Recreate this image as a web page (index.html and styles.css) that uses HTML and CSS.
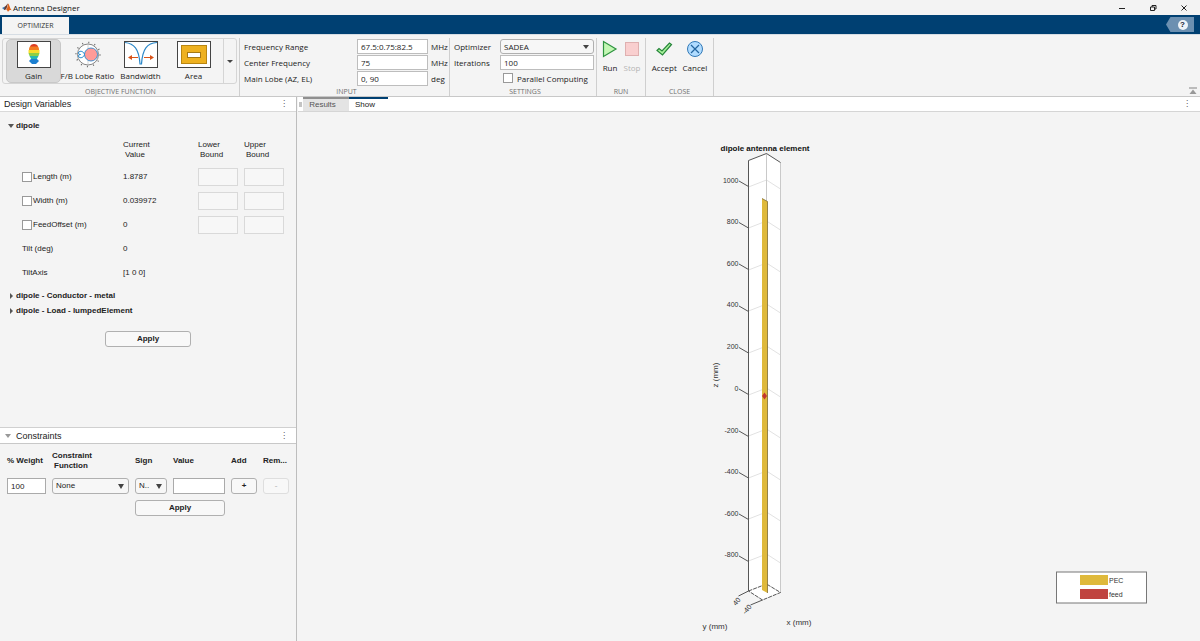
FILE: index.html
```html
<!DOCTYPE html>
<html lang="en">
<head>
<meta charset="utf-8">
<title>Antenna Designer</title>
<link rel="stylesheet" href="styles.css">
</head>
<body>
<div class="app">
  <header class="titlebar">
    <svg class="logo" viewBox="0 0 20 18"><path d="M0 10l6-3 3 3-4 4z" fill="#3a78b5"/><path d="M6 7c3-1 4-6 6-6l-3 10-3 3-2-1z" fill="#6b3a2c"/><path d="M12 1c3 2 4 11 8 14-4-2-5-1-8 3-1-3-2-4-4-4 3-3 3-9 4-13z" fill="#e0641c"/></svg>
    <h1 class="title">Antenna Designer</h1>
    <div class="window-buttons">
      <button aria-label="Minimize"><svg viewBox="0 0 8 8"><path d="M1 4.500h6"/></svg></button>
      <button aria-label="Restore"><svg viewBox="0 0 8 8"><path d="M1.500 3h4v3.500h-4zM3 3V1.500h4V5H5.500"/></svg></button>
      <button aria-label="Close"><svg viewBox="0 0 8 8"><path d="M1.500 1.500l5 5M6.500 1.500l-5 5"/></svg></button>
    </div>
  </header>

  <nav class="ribbon-tabs">
    <button class="ribbon-tab">OPTIMIZER</button>
    <button class="help" aria-label="Help"><span class="help-mark">?</span></button>
  </nav>

  <section class="toolstrip">
    <div class="group group-gallery">
      <div class="group-body gallery">
        <button class="tile selected">
          <svg viewBox="0 0 34 27"><rect x=".5" y=".5" width="33" height="26" fill="#fff" stroke="#444"/><path d="M13 6c0-4 8-4 8 0z" fill="#dc3b22"/><path d="M12 9c0-2 .5-3 1-3.500h8c.5.500 1 1.500 1 3.500z" fill="#f37b21"/><path d="M11.500 9h11v3h-11z" fill="#f8dd2a"/><path d="M11.500 12h11l-1 3h-9z" fill="#8ccf45"/><path d="M12.500 15h9l-2 3.500h-5z" fill="#25b8b0"/><path d="M14 18h6l2 2-3 3h-4l-3-3z" fill="#1c7fd0"/></svg>
          <span>Gain</span>
        </button>
        <button class="tile">
          <svg viewBox="0 0 34 27"><g fill="none" stroke="#666"><circle cx="17" cy="13.500" r="12" stroke-width="1.500" stroke-dasharray="1 5.280"/><circle cx="17" cy="13.500" r="10.500" fill="#fff" stroke-width=".8"/><path d="M17 3v21M6.500 13.500h21" stroke="#bbb" stroke-width=".6"/></g><circle cx="20" cy="13.500" r="6.500" fill="#ff9b98" stroke="#1683cf" stroke-width=".8"/><path d="M13.500 13.500c-1-4-6-4-6-1.500 0 1 1 1.500 2 1.500-1 0-2 .5-2 1.500 0 2.500 5 2.500 6-1.500z" fill="#fff" stroke="#1683cf"/></svg>
          <span>F/B Lobe Ratio</span>
        </button>
        <button class="tile">
          <svg viewBox="0 0 34 27"><rect x=".5" y=".5" width="33" height="26" fill="#fff" stroke="#444"/><path d="M1 1.500c9 1 14 6 15 21.500h1.500C18.500 8 23 2 33 1.500" fill="none" stroke="#2b87c8" stroke-width="1.200"/><path d="M6 16.500h8M20 16.500h8" stroke="#d95319" stroke-width="1.200"/><path d="M4 16.500l4-2.500v5zM30 16.500l-4-2.500v5z" fill="#d95319"/></svg>
          <span>Bandwidth</span>
        </button>
        <button class="tile">
          <svg viewBox="0 0 34 27"><rect x=".5" y=".5" width="33" height="26" fill="#fff" stroke="#444"/><rect x="4.500" y="4.500" width="25" height="18" fill="#eeb120" stroke="#b98612"/><rect x="10.500" y="11.500" width="13" height="5" fill="#fff" stroke="#a57814"/></svg>
          <span>Area</span>
        </button>
        <button class="gallery-more" aria-label="More objective functions"><i class="caret"></i></button>
      </div>
      <h2 class="group-name">OBJECTIVE FUNCTION</h2>
    </div>

    <div class="group group-input">
      <div class="group-body fields">
        <label for="range">Frequency Range</label><input id="range" value="67.5:0.75:82.5"><span>MHz</span>
        <label for="center">Center Frequency</label><input id="center" value="75"><span>MHz</span>
        <label for="lobe">Main Lobe (AZ, EL)</label><input id="lobe" value="0, 90"><span>deg</span>
      </div>
      <h2 class="group-name">INPUT</h2>
    </div>

    <div class="group group-settings">
      <div class="group-body settings">
        <label for="optimizer">Optimizer</label>
        <div class="select"><select id="optimizer"><option>SADEA</option></select></div>
        <label for="iterations">Iterations</label><input id="iterations" value="100">
        <label class="parallel"><input type="checkbox" class="check">Parallel Computing</label>
      </div>
      <h2 class="group-name">SETTINGS</h2>
    </div>

    <div class="group group-run">
      <div class="group-body actions">
        <button class="action"><svg viewBox="0 0 18 18"><path d="M2.500 1.500v15L15 9z" fill="#c3f7b4" stroke="#2e9440" stroke-width="1.200"/></svg>Run</button>
        <button class="action" disabled><svg viewBox="0 0 18 18"><rect x="2.500" y="2.500" width="13" height="13" fill="#f9cfcf" stroke="#dfb0b0"/></svg>Stop</button>
      </div>
      <h2 class="group-name">RUN</h2>
    </div>

    <div class="group group-close">
      <div class="group-body actions">
        <button class="action"><svg viewBox="0 0 18 18"><path d="M2 10.500l2-2 3 2.500 7.500-8 2 1.500L7.500 15z" fill="#a9f29b" stroke="#25853a" stroke-width="1.200"/></svg>Accept</button>
        <button class="action"><svg viewBox="0 0 18 18"><circle cx="9" cy="9" r="7.500" fill="#b1dcff" stroke="#3279b7"/><path d="M5 5l8 8M13 5l-8 8" stroke="#24659e" stroke-width="1.200"/></svg>Cancel</button>
      </div>
      <h2 class="group-name">CLOSE</h2>
    </div>
    <button class="collapse" aria-label="Collapse toolstrip"><svg viewBox="0 0 8 8"><path d="M0 1h8" stroke="#aaa" stroke-width="1.500"/><path d="M4 2.500L7.500 7h-7z" fill="#999"/></svg></button>
  </section>

  <main class="workspace">
    <aside class="side">
      <section class="panel panel-variables">
        <div class="panel-head"><h2>Design Variables</h2><button class="dots" aria-label="Design Variables menu">⋮</button></div>
        <div class="panel-body">
          <button class="node"><i class="open"></i>dipole</button>
          <table class="variables">
            <thead><tr><th class="col-name"></th><th class="col-value">Current<br><span>Value</span></th><th class="col-bound">Lower<br><span>Bound</span></th><th class="col-bound">Upper<br><span>Bound</span></th></tr></thead>
            <tbody>
              <tr><td><label><input type="checkbox" class="check">Length (m)</label></td><td>1.8787</td><td><input class="bound" aria-label="Length lower bound" disabled></td><td><input class="bound" aria-label="Length upper bound" disabled></td></tr>
              <tr><td><label><input type="checkbox" class="check">Width (m)</label></td><td>0.039972</td><td><input class="bound" aria-label="Width lower bound" disabled></td><td><input class="bound" aria-label="Width upper bound" disabled></td></tr>
              <tr><td><label><input type="checkbox" class="check">FeedOffset (m)</label></td><td>0</td><td><input class="bound" aria-label="FeedOffset lower bound" disabled></td><td><input class="bound" aria-label="FeedOffset upper bound" disabled></td></tr>
              <tr><td>Tilt (deg)</td><td>0</td><td></td><td></td></tr>
              <tr><td>TiltAxis</td><td>[1 0 0]</td><td></td><td></td></tr>
            </tbody>
          </table>
          <button class="node"><i class="closed"></i>dipole - Conductor - metal</button>
          <button class="node"><i class="closed"></i>dipole - Load - lumpedElement</button>
          <button class="push apply-variables">Apply</button>
        </div>
      </section>

      <section class="panel panel-constraints">
        <div class="panel-head"><i class="fold"></i><h2>Constraints</h2><button class="dots" aria-label="Constraints menu">⋮</button></div>
        <div class="constraints">
          <label for="weight">% Weight</label>
          <label for="function">Constraint<br><span>Function</span></label>
          <label for="sign">Sign</label>
          <label for="value">Value</label>
          <label for="add">Add</label>
          <label for="remove">Rem...</label>
          <input id="weight" value="100">
          <div class="select solid"><select id="function"><option>None</option></select></div>
          <div class="select solid"><select id="sign"><option>N..</option></select></div>
          <input id="value">
          <button id="add" class="push">+</button>
          <button id="remove" class="push" disabled>-</button>
          <button class="push apply-constraints">Apply</button>
        </div>
      </section>
    </aside>

    <section class="document">
      <div class="doc-tabs">
        <span class="grip"></span>
        <button class="doc-tab">Results</button>
        <button class="doc-tab active">Show</button>
        <button class="dots" aria-label="Document menu">⋮</button>
      </div>
      <svg class="plot" viewBox="298 112 902 529" role="img" aria-label="dipole antenna element">
        <path d="M748.500 160.500l18-7 14 9v430l-18 7.500-14-9z" fill="#fff"/>
        <path class="grid" d="M748.500 187l18-7 14 9M748.500 228l18-7 14 9M748.500 270l18-7 14 9M748.500 311l18-7 14 9M748.500 353l18-7 14 9M748.500 395l18-7 14 9M748.500 436l18-7 14 9M748.500 478l18-7 14 9M748.500 519l18-7 14 9M748.500 561l18-7 14 9"/>
        <path d="M766.500 153.500v430M780.500 162.500v430" class="back-edge"/>
        <path d="M748.500 591V160.500l18-7 14 9" class="axis"/>
        <path d="M748.500 591l18-7 14 8.500-18 7.500z" class="axis dashed"/>
        <path d="M748.500 591l-10 5M762.500 600l-12 5" class="axis"/>
        <path class="axis" d="M739 181l9.500 5.500M739 222.500l9.500 5.500M739 264l9.500 5.500M739 306l9.500 5.500M739 347.500l9.500 5.500M739 389l9.500 5.500M739 431l9.500 5.500M739 472.500l9.500 5.500M739 514l9.500 5.500M739 556l9.500 5.500"/>
        <path d="M762 198.500l5.500 3V593l-5.500-3z" fill="#dfb93b"/>
        <path d="M762 198.500l5.500 3V593" fill="none" stroke="#7e6b31" stroke-width=".8"/>
        <path d="M764.500 392.500l2.500 3.500-2.500 3.500-2.500-3.500z" fill="#c3362f"/>
        <text x="765" y="150.500" class="plot-title">dipole antenna element</text>
        <g class="ticks">
          <text x="738.500" y="183">1000</text><text x="738.500" y="224">800</text><text x="738.500" y="266">600</text><text x="738.500" y="307">400</text><text x="738.500" y="349">200</text><text x="738.500" y="391">0</text><text x="738.500" y="433">-200</text><text x="738.500" y="474">-400</text><text x="738.500" y="516">-600</text><text x="738.500" y="557">-800</text>
          <text transform="translate(741 600) rotate(-50)">40</text>
          <text transform="translate(752 607) rotate(-50)">-40</text>
        </g>
        <g class="axis-names">
          <text transform="translate(717.500 375) rotate(-90)">z (mm)</text>
          <text x="715" y="628.500">y (mm)</text>
          <text x="799" y="624.500">x (mm)</text>
        </g>
        <g class="legend">
          <rect x="1056.500" y="572" width="90" height="31" fill="#fff" stroke="#777"/>
          <rect x="1080" y="575" width="28" height="10" fill="#dfb93b"/>
          <rect x="1080" y="589" width="28" height="10" fill="#c0443f"/>
          <text x="1109" y="583">PEC</text><text x="1109" y="596.500">feed</text>
        </g>
      </svg>
    </section>
  </main>
</div>
</body>
</html>
```
FILE: styles.css
```css
* { box-sizing: border-box; }
body { margin: 0; background: #f4f4f4; color: #222; font: 8px/10px "Liberation Sans", Arial, sans-serif; }
button, input, select { font: inherit; color: inherit; margin: 0; padding: 0; border: 0; border-radius: 0; background: none; min-width: 0; }
h1, h2 { margin: 0; font: inherit; }
svg { display: block; }
.app { display: flex; flex-direction: column; min-height: 100vh; }

.titlebar { display: flex; align-items: center; height: 15px; padding: 0 12px 0 2px; gap: 1px; background: #f3f3f3; }
.logo { width: 10px; height: 9px; }
.title { font: 8px/14px "Open Sans", sans-serif; color: #111; }
.window-buttons { display: flex; gap: 23px; margin-left: auto; }
.window-buttons svg { width: 8px; height: 8px; fill: none; stroke: #222; }

.ribbon-tabs { display: flex; justify-content: space-between; align-items: flex-end; height: 19px; padding-left: 2px; background: #004072; }
.ribbon-tab { width: 67px; height: 17px; background: #f4f4f4; font: 7px/16px "Open Sans", sans-serif; color: #333; }
.help { display: flex; align-items: center; justify-content: center; width: 28px; height: 15px; margin: 0 6px 2px 0; padding-left: 5px; background: #6c90b1; clip-path: polygon(0 50%, 16% 0, 100% 0, 100% 100%, 16% 100%); }
.help-mark { width: 10px; height: 10px; border-radius: 50%; background: #eef3f8; color: #123; font-weight: bold; }

.toolstrip { display: flex; height: 63px; padding-top: 3px; border-top: 1px solid #d6dde4; border-bottom: 1px solid #c8c8c8; background: #f4f4f4; font: 8px/11px "Open Sans", sans-serif; }
.group { display: flex; flex-direction: column; justify-content: space-between; border-right: 1px solid #cfcfcf; }
.group-body { height: 48px; }
.group-name { text-align: center; font-size: 7px; line-height: 8px; color: #707070; }
.group-gallery { width: 240px; padding-left: 2px; }
.group-input { width: 210px; padding-left: 4px; }
.group-settings { width: 147px; padding-left: 4px; }
.group-run { width: 49px; }
.group-close { width: 68px; }
.gallery { display: flex; height: 46px; margin-right: 2px; padding-left: 3px; border: 1px solid #d5d5d5; border-radius: 3px; }
.tile { display: flex; flex-direction: column; align-items: center; gap: 2px; flex: 1; padding-top: 2px; border-radius: 5px; white-space: nowrap; }
.tile svg { width: 34px; height: 27px; }
.tile.selected { background: #d9d9d9; border: 1px solid #c8c8c8; padding-top: 1px; }
.gallery-more { margin-left: 3px; width: 13px; border-left: 1px solid #d5d5d5; display: flex; align-items: center; justify-content: center; }
.caret { border: 3px solid transparent; border-top-color: #444; border-bottom: 0; }
.fields { display: grid; grid-template-columns: 113px 71px 1fr; grid-auto-rows: 16px; align-items: center; }
.fields span { padding-left: 3px; }
.fields input, .settings > input { width: 100%; height: 15px; padding-left: 3px; border: 1px solid #bdbdbd; background: #fff; }
.settings { display: grid; grid-template-columns: 46px 94px; grid-auto-rows: 16px; align-items: center; }
.parallel { grid-column: 2; display: flex; align-items: center; gap: 4px; padding-left: 3px; }
.check { appearance: none; flex: none; width: 10px; height: 10px; border: 1px solid #999; background: #fff; }
.select { position: relative; }
.select select { appearance: none; display: block; width: 100%; height: 15px; padding-left: 3px; border: 1px solid #b0b0b0; border-radius: 3px; background: #f7f7f7; }
.select::after { content: ""; position: absolute; right: 5px; top: 6px; border: 3px solid transparent; border-top: 4px solid #444; border-bottom: 0; pointer-events: none; }
.actions { display: flex; justify-content: space-evenly; align-items: flex-start; padding-top: 2px; }
.action { display: flex; flex-direction: column; align-items: center; gap: 4px; line-height: 11px; }
.action svg { width: 18px; height: 18px; }
.action:disabled { color: #b5b5b5; }
.collapse { margin: auto 3px 1px auto; }
.collapse svg { width: 8px; height: 8px; }

.workspace { flex: 1; display: grid; grid-template-columns: 297px 1fr; }
.side { display: flex; flex-direction: column; border-right: 1px solid #bdbdbd; }
.panel-variables { flex: 1; }
.panel-head { display: flex; align-items: center; height: 15px; padding: 0 8px 0 4px; border-bottom: 1px solid #d9d9d9; background: #fff; font-size: 9px; }
.dots { width: 8px; margin-left: auto; font: 8px/12px "DejaVu Sans", sans-serif; color: #555; }
.panel-body { display: flex; flex-direction: column; padding: 6px 0 0 8px; }
.node { display: flex; align-items: center; align-self: flex-start; gap: 2px; height: 15px; font-weight: bold; }
.open { width: 6px; border: 3px solid transparent; border-top: 4px solid #555; border-bottom: 0; }
.closed { width: 4px; margin: 0 0 0 2px; border: 3px solid transparent; border-left: 3px solid #555; border-right: 0; }
.variables { width: 268px; margin: 0 0 3px 14px; border-collapse: collapse; table-layout: fixed; }
.variables th { height: 32px; padding: 2px 0 0; text-align: left; vertical-align: middle; font-weight: normal; }
.variables th span { padding-left: 2px; }
.variables td { height: 24px; padding: 0; }
.variables label { display: flex; align-items: center; gap: 1px; }
.col-name { width: 101px; }
.col-value { width: 75px; }
.col-bound { width: 46px; }
.bound { display: block; width: 40px; height: 18px; border: 1px solid #d9d9d9; background: #f7f7f7; }
.push { height: 16px; border: 1px solid #b0b0b0; border-radius: 3px; background: #f8f8f8; font-weight: bold; }
.push:disabled { border-color: #dedede; color: #c5c5c5; }
.apply-variables { align-self: center; width: 86px; margin: 13px 8px 0 0; }

.panel-constraints { flex: 0 0 214px; }
.panel-constraints .panel-head { height: 17px; border-top: 1px solid #d0d0d0; border-bottom-color: #c8c8c8; }
.fold { margin: 0 5px 0 1px; border: 3px solid transparent; border-top: 4px solid #999; border-bottom: 0; }
.constraints { display: grid; grid-template-columns: 39px 77px 32px 52px 26px 26px; grid-template-rows: 22px 16px 16px; gap: 6px; align-items: center; padding: 6px 0 0 7px; }
.constraints label { font-weight: bold; white-space: nowrap; }
.constraints label span { padding-left: 2px; }
.constraints > input { width: 100%; height: 16px; padding-left: 3px; border: 1px solid #aaa; background: #fff; }
.solid select { height: 16px; }
.solid::after { border-width: 5px 3px 0; }
.apply-constraints { grid-column: 3 / 5; }

.document { display: flex; flex-direction: column; padding-left: 1px; min-width: 0; }
.doc-tabs { display: flex; align-items: stretch; height: 15px; padding-right: 9px; border-bottom: 1px solid #d5d5d5; background: #fff; }
.grip { width: 3px; height: 5px; margin: 5px 1px 0; background: #c4c4c4; }
.doc-tab { width: 46px; border-top: 2px solid #909090; background: #e4e4e4; color: #555; padding-right: 7px; }
.doc-tab.active { width: 39px; border-color: #004072; background: #fff; color: #222; }
.plot { flex: 1; width: 100%; min-height: 0; fill: #333; }
.grid { fill: none; stroke: #e2e2e2; }
.back-edge { fill: none; stroke: #c9c9c9; }
.axis { fill: none; stroke: #555; stroke-width: 1; }
.dashed { stroke-dasharray: 4 1; }
.plot-title { font-weight: bold; text-anchor: middle; fill: #111; }
.ticks { font-size: 7px; text-anchor: end; }
.axis-names { text-anchor: middle; }
.legend { font-size: 7px; }
```
